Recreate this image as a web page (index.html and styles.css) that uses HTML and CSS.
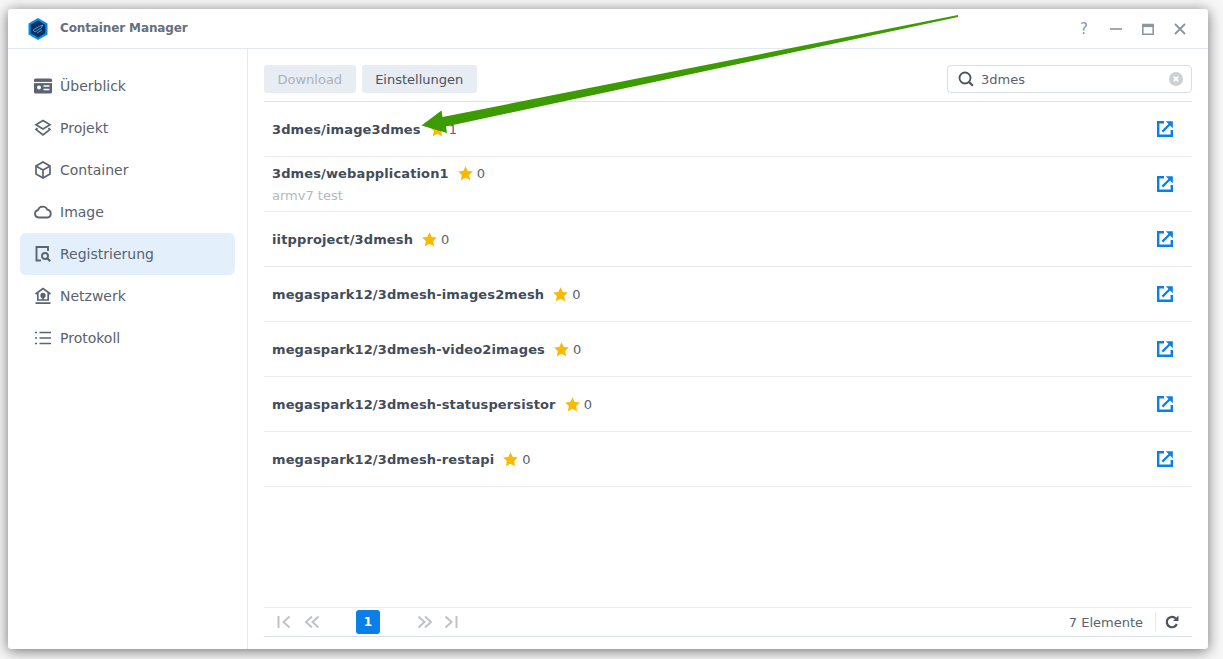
FILE: index.html
```html
<!DOCTYPE html>
<html lang="de">
<head>
<meta charset="utf-8">
<title>Container Manager</title>
<link rel="stylesheet" href="styles.css">
</head>
<body>
<svg class="defs" width="0" height="0">
  <symbol id="star" viewBox="0 0 14 14"><path d="M7 .2l2.100 4.400 4.800.6-3.500 3.300.9 4.800L7 11l-4.300 2.300.9-4.800L.1 5.200l4.800-.6z" fill="#fbb900"/></symbol>
  <symbol id="ext" viewBox="0 0 16 16"><path d="M7 1.200H1.200v13.600h13.600V9" fill="none" stroke="#0a7fe8" stroke-width="2.400"/><path d="M5.400 10.600L12.500 3.500" fill="none" stroke="#0a7fe8" stroke-width="2.200"/><path d="M8.800 .2H15.800V7.200z" fill="#0a7fe8"/></symbol>
</svg>
<div class="window">
  <header class="titlebar">
    <svg class="logo" viewBox="0 0 20 22" width="20" height="22"><path d="M10 0l9.500 5.500v11L10 22 .5 16.500v-11z" fill="#0a8ae6"/><path d="M10 2.500l7.300 4.200v8.600L10 19.500l-7.300-4.200V6.700z" fill="#0e2f5e"/><path d="M5 12l7-4 3-1-2 3-6 4zM9 15l5-3" fill="none" stroke="#3f9fe0" stroke-width="1"/></svg>
    <span class="app-name">Container Manager</span>
    <div class="win-controls">
      <span class="help">?</span>
      <svg width="12" height="12" viewBox="0 0 12 12"><path d="M0 6h12" stroke="#8f959e" stroke-width="1.600"/></svg>
      <svg width="12" height="12" viewBox="0 0 12 12"><path d="M.8 1.500h10.400v9.700H.8z" fill="none" stroke="#8f959e" stroke-width="1.600"/><path d="M.8 2.800h10.400" stroke="#8f959e" stroke-width="2.600"/></svg>
      <svg width="12" height="12" viewBox="0 0 12 12"><path d="M1 1l10 10M11 1L1 11" stroke="#8f959e" stroke-width="1.800"/></svg>
    </div>
  </header>
  <div class="body">
    <nav class="sidebar">
      <a class="nav-item"><svg width="18" height="18" viewBox="0 0 18 18"><rect y="1.500" width="18" height="15" rx="1.500" fill="#5b6470"/><path d="M0 5.500h18" stroke="#fff" stroke-width="1.200"/><circle cx="5" cy="10.500" r="2" fill="#fff"/><path d="M9.500 9h6M9.500 12.500h6" stroke="#fff" stroke-width="1.300"/></svg>Überblick</a>
      <a class="nav-item"><svg width="18" height="18" viewBox="0 0 18 18" fill="none" stroke="#5b6470" stroke-width="1.700"><path d="M9 1.500l7 4.200-7 4.200-7-4.200z"/><path d="M3.500 9L2 10.500l7 5.500 7-5.500L14.500 9"/></svg>Projekt</a>
      <a class="nav-item"><svg width="18" height="18" viewBox="0 0 18 18" fill="none" stroke="#5b6470" stroke-width="1.700"><path d="M9 1l7 4v8l-7 4-7-4V5z"/><path d="M2.300 5.200L9 9l6.700-3.800M9 9v7.500"/></svg>Container</a>
      <a class="nav-item"><svg width="18" height="18" viewBox="0 0 18 18" fill="none" stroke="#5b6470" stroke-width="1.800"><path d="M4.500 14.500a3.700 3.700 0 0 1-.6-7.300A5 5 0 0 1 13.300 6.600a4 4 0 0 1 .2 7.900z"/></svg>Image</a>
      <a class="nav-item active"><svg width="18" height="18" viewBox="0 0 18 18" fill="none" stroke="#5b6470" stroke-width="1.900"><path d="M14 6V2H2.500v13.500H7"/><circle cx="11" cy="11" r="3"/><path d="M13.200 13.200l3 3" stroke-width="2.200"/></svg>Registrierung</a>
      <a class="nav-item"><svg width="18" height="18" viewBox="0 0 18 18" fill="none" stroke="#5b6470" stroke-width="1.700"><path d="M1.500 7L9 1.500 16.500 7M3.800 6v7h10.400V6"/><circle cx="9" cy="8.500" r="1.800" fill="#5b6470"/><path d="M9 10v3M1.500 16.200h15"/></svg>Netzwerk</a>
      <a class="nav-item"><svg width="18" height="18" viewBox="0 0 18 18" stroke="#5b6470" stroke-width="1.700"><path d="M5.500 3.500H17M5.500 9H17M5.500 14.500H17M1 3.500h2M1 9h2M1 14.500h2"/></svg>Protokoll</a>
    </nav>
    <main class="main">
      <div class="toolbar">
        <button class="btn disabled">Download</button>
        <button class="btn">Einstellungen</button>
        <div class="search">
          <svg width="16" height="16" viewBox="0 0 16 16" fill="none" stroke="#4a5360" stroke-width="1.800"><circle cx="7" cy="7" r="5.500"/><path d="M11 11l3.800 3.800" stroke-width="2.200"/></svg>
          <span class="search-text">3dmes</span>
          <svg class="clear" width="14" height="14" viewBox="0 0 14 14"><circle cx="7" cy="7" r="7" fill="#ccd0d6"/><path d="M4.700 4.700l4.600 4.600M9.300 4.700l-4.600 4.600" stroke="#fff" stroke-width="1.800"/></svg>
        </div>
      </div>
      <div class="list">
        <div class="row"><div class="info"><div class="head"><b class="name">3dmes/image3dmes</b><svg class="star" width="15" height="15"><use href="#star"/></svg><span class="count">1</span></div></div><svg class="ext" width="16" height="16"><use href="#ext"/></svg></div>
        <div class="row"><div class="info"><div class="head"><b class="name">3dmes/webapplication1</b><svg class="star" width="15" height="15"><use href="#star"/></svg><span class="count">0</span></div><div class="desc">armv7 test</div></div><svg class="ext" width="16" height="16"><use href="#ext"/></svg></div>
        <div class="row"><div class="info"><div class="head"><b class="name">iitpproject/3dmesh</b><svg class="star" width="15" height="15"><use href="#star"/></svg><span class="count">0</span></div></div><svg class="ext" width="16" height="16"><use href="#ext"/></svg></div>
        <div class="row"><div class="info"><div class="head"><b class="name">megaspark12/3dmesh-images2mesh</b><svg class="star" width="15" height="15"><use href="#star"/></svg><span class="count">0</span></div></div><svg class="ext" width="16" height="16"><use href="#ext"/></svg></div>
        <div class="row"><div class="info"><div class="head"><b class="name">megaspark12/3dmesh-video2images</b><svg class="star" width="15" height="15"><use href="#star"/></svg><span class="count">0</span></div></div><svg class="ext" width="16" height="16"><use href="#ext"/></svg></div>
        <div class="row"><div class="info"><div class="head"><b class="name">megaspark12/3dmesh-statuspersistor</b><svg class="star" width="15" height="15"><use href="#star"/></svg><span class="count">0</span></div></div><svg class="ext" width="16" height="16"><use href="#ext"/></svg></div>
        <div class="row"><div class="info"><div class="head"><b class="name">megaspark12/3dmesh-restapi</b><svg class="star" width="15" height="15"><use href="#star"/></svg><span class="count">0</span></div></div><svg class="ext" width="16" height="16"><use href="#ext"/></svg></div>
      </div>
      <footer class="pager">
        <svg class="pg-first" width="14" height="14" viewBox="0 0 14 14" fill="none" stroke="#bfc3c9" stroke-width="2"><path d="M1.500 1v12M12.500 1.500L6.500 7l6 5.500"/></svg>
        <svg class="pg-prev" width="16" height="14" viewBox="0 0 16 14" fill="none" stroke="#bfc3c9" stroke-width="2"><path d="M8 1.500L2 7l6 5.500M14.500 1.500L8.500 7l6 5.500"/></svg>
        <span class="page">1</span>
        <svg class="pg-next" width="16" height="14" viewBox="0 0 16 14" fill="none" stroke="#bfc3c9" stroke-width="2"><path d="M1.500 1.500L7.500 7l-6 5.500M8 1.500L14 7l-6 5.500"/></svg>
        <svg class="pg-last" width="14" height="14" viewBox="0 0 14 14" fill="none" stroke="#bfc3c9" stroke-width="2"><path d="M12.500 1v12M1.500 1.500L7.500 7l-6 5.500"/></svg>
        <span class="total">7 Elemente</span>
        <span class="sep"></span>
        <svg class="refresh" width="14" height="14" viewBox="0 0 14 14" fill="none" stroke="#4a5360" stroke-width="2.200"><path d="M11.800 9A5.200 5.200 0 1 1 10.800 3.500"/><path d="M13.500 0.500v5.500H8z" fill="#4a5360" stroke="none"/></svg>
      </footer>
    </main>
  </div>
</div>
<svg class="arrow" width="1223" height="659" viewBox="0 0 1223 659"><path d="M958 15L958 17 446 126.500 447 133 421.500 125.500 441.500 110.500 442.500 117z" fill="#3b9b00"/></svg>
</body>
</html>
```
FILE: styles.css
```css
* { box-sizing: border-box; }
html, body { margin: 0; height: 100%; }
body {
  background: #f7f7f7;
  font-family: "DejaVu Sans", sans-serif;
  font-size: 13px;
  color: #4a5360;
  padding: 9px 15px 10px 8px;
  overflow: hidden;
}
.defs { position: absolute; }
.window {
  height: 640px;
  background: #fff;
  border-radius: 3px;
  box-shadow: 0 2px 14px rgba(0, 0, 0, .55);
  display: flex;
  flex-direction: column;
}
.titlebar {
  height: 40px;
  flex: none;
  border-bottom: 1px solid #e2e9f1;
  display: flex;
  align-items: center;
  padding-left: 20px;
}
.logo { margin-right: 12px; }
.app-name { font-weight: 700; font-size: 12px; letter-spacing: -.12px; color: #66707c; margin-bottom: 2px; }
.win-controls { margin-left: auto; display: flex; align-items: center; gap: 20px; padding-right: 22px; }
.help { width: 12px; text-align: center; font-size: 15px; color: #8f959e; line-height: 12px; }
.body { flex: 1; display: flex; min-height: 0; }
.sidebar {
  width: 240px;
  flex: none;
  border-right: 1px solid #e5e8ec;
  padding: 16px 12px 0;
}
.nav-item {
  height: 42px;
  width: 215px;
  display: flex;
  align-items: center;
  gap: 8px;
  padding-left: 14px;
  border-radius: 6px;
  font-size: 14px;
  color: #59626e;
}
.nav-item svg { flex: none; }
.nav-item.active { background: #e3f0fc; }
.main { flex: 1; min-width: 0; display: flex; flex-direction: column; padding: 16px 16px 12px; }
.toolbar {
  height: 37px;
  flex: none;
  display: flex;
  gap: 6px;
  align-items: flex-start;
  border-bottom: 1px solid #dbe2ea;
}
.btn {
  height: 28px;
  border: 0;
  border-radius: 3px;
  background: #e8ecf3;
  font: 13px "DejaVu Sans", sans-serif;
  color: #4a5360;
  padding: 0 13.5px;
}
.btn.disabled { color: #acb1b9; }
.search {
  margin-left: auto;
  width: 245px;
  height: 28px;
  border: 1px solid #d6dfe9;
  border-radius: 4px;
  display: flex;
  align-items: center;
  padding: 0 8px 0 10px;
  gap: 7px;
}
.search-text { flex: 1; color: #59626e; }
.list { flex: 1; }
.row {
  height: 55px;
  border-bottom: 1px solid #e8ebef;
  display: flex;
  align-items: center;
  padding: 0 19px 0 8px;
}
.info { flex: 1; }
.head { display: flex; align-items: center; }
.name { font-size: 13px; letter-spacing: .13px; color: #434c59; }
.star { margin-left: 9px; margin-right: 4px; }
.count { color: #59626e; font-size: 13px; }
.desc { font-size: 13px; color: #b4b8be; margin-top: 7px; }
.ext { margin-bottom: 1px; }
.pager {
  height: 30px;
  flex: none;
  border-top: 1px solid #e8ebef;
  border-bottom: 1px solid #d9dfe6;
  display: flex;
  align-items: center;
  padding-left: 13px;
}
.pg-prev { margin-left: 13px; }
.page {
  width: 24px;
  height: 24px;
  margin-left: 36px;
  border-radius: 3px;
  background: #0a7fe8;
  color: #fff;
  font-size: 12px;
  font-weight: 700;
  display: flex;
  align-items: center;
  justify-content: center;
}
.pg-next { margin-left: 37px; }
.pg-last { margin-left: 11px; }
.total { margin-left: auto; color: #59626e; font-size: 13px; }
.sep { width: 1px; height: 20px; background: #e8ebef; margin: 0 9px 0 12px; }
.refresh { margin-right: 13px; }
.arrow { position: absolute; left: 0; top: 0; pointer-events: none; }
```
